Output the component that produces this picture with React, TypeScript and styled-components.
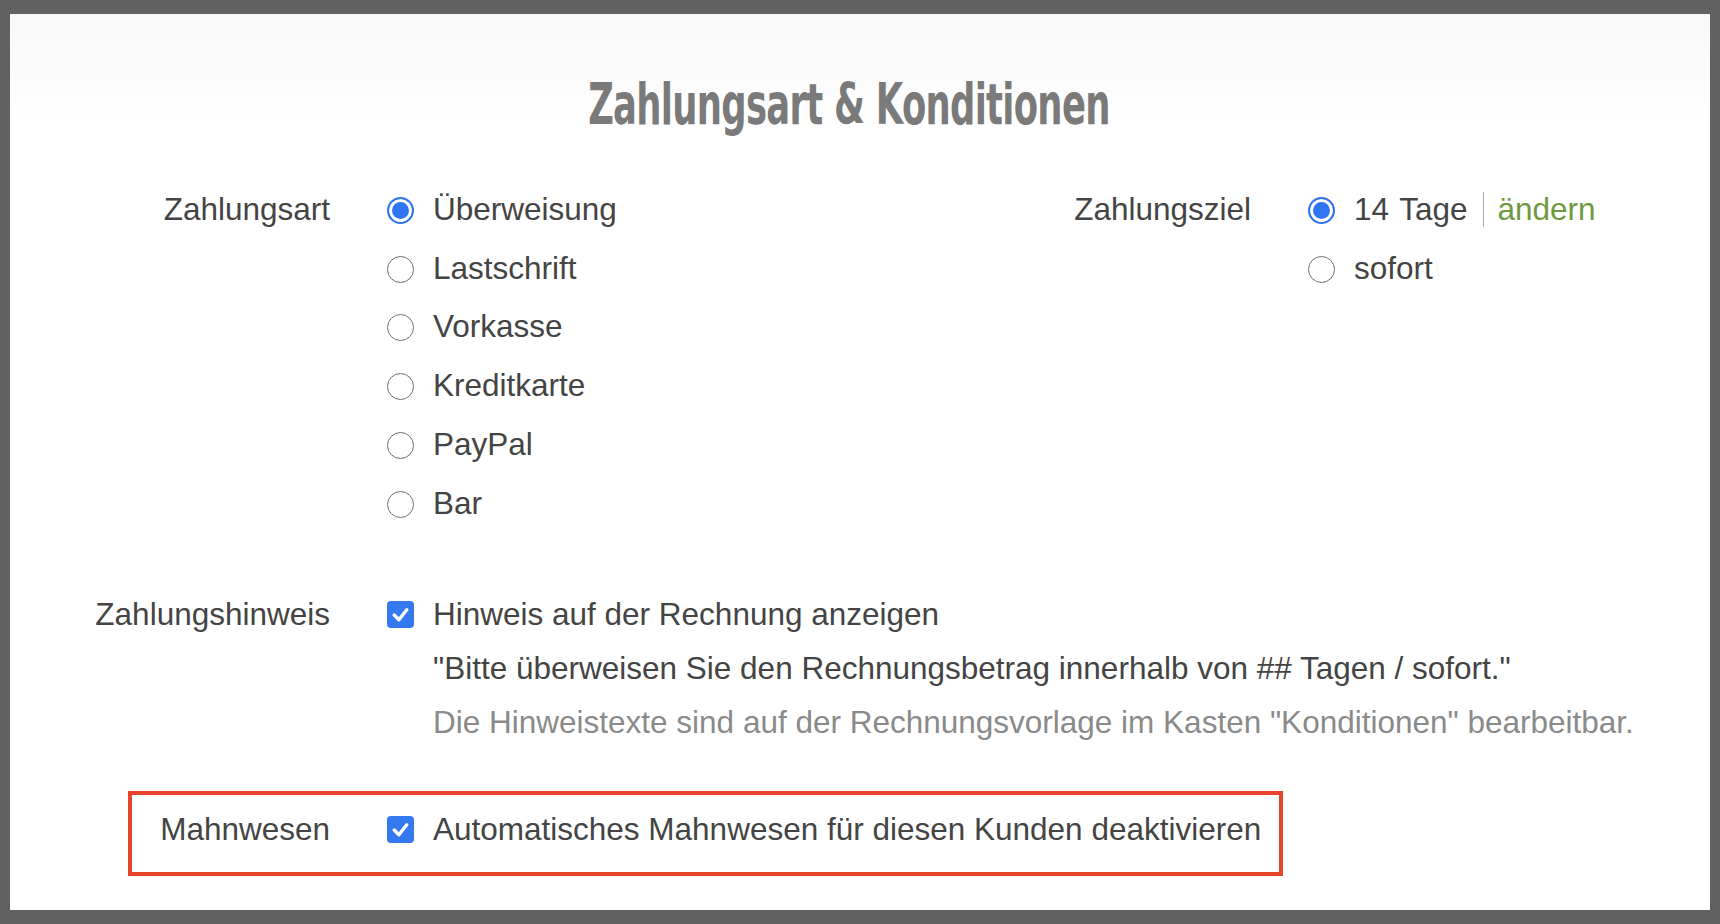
import React, { useState } from "react";
import styled, { createGlobalStyle } from "styled-components";

const GlobalStyle = createGlobalStyle`
  html, body {
    margin: 0;
    padding: 0;
    background: #616161;
  }
  body {
    font-family: "Liberation Sans", Arial, sans-serif;
  }
`;

const Frame = styled.div`
  box-sizing: border-box;
  height: 924px;
  padding: 14px 10px;
`;

const Panel = styled.div`
  height: 896px;
  background: linear-gradient(#f8f8f8 0, #fbfbfb 60px, #fff 110px);
  color: #444;
  font-size: 31.5px;
`;

const TitleBar = styled.div`
  display: flex;
  justify-content: center;
  padding: 62px 22px 0 0;
  height: 57px;
`;

const Title = styled.h1`
  margin: 0;
  font-family: "DejaVu Sans Condensed", "DejaVu Sans", sans-serif;
  font-stretch: condensed;
  font-weight: bold;
  font-size: 57px;
  line-height: 57px;
  letter-spacing: -1px;
  color: #7a7a7a;
  transform: scaleX(0.69);
  white-space: nowrap;
`;

const TopSection = styled.div`
  display: grid;
  grid-template-columns: 1064px 1fr;
  margin-top: 47px;
`;

interface FieldProps {
  labelWidth: number;
}

const Field = styled.div<FieldProps>`
  display: grid;
  grid-template-columns: ${(p) => p.labelWidth}px 1fr;
  column-gap: 57px;
  align-items: start;
`;

interface LabelProps {
  rowHeight: number;
}

const Label = styled.div<LabelProps>`
  text-align: right;
  line-height: ${(p) => p.rowHeight}px;
  white-space: nowrap;
  color: #444;
`;

const OptionList = styled.div`
  display: flex;
  flex-direction: column;
`;

interface OptionRowProps {
  rowHeight: number;
}

const OptionRow = styled.label<OptionRowProps>`
  display: flex;
  align-items: center;
  height: ${(p) => p.rowHeight}px;
  gap: 19px;
  white-space: nowrap;
  cursor: pointer;
`;

interface RadioProps {
  checked: boolean;
}

const Radio = styled.span<RadioProps>`
  box-sizing: border-box;
  flex: 0 0 auto;
  width: 27px;
  height: 27px;
  margin-top: 2px;
  border-radius: 50%;
  border: ${(p) => (p.checked ? "2.5px solid #2f74f0" : "1.5px solid #6e6e6e")};
  background: ${(p) => (p.checked ? "#2f74f0" : "#fff")};
  box-shadow: ${(p) => (p.checked ? "inset 0 0 0 3px #fff" : "none")};
`;

const CheckBox = styled.span`
  display: flex;
  align-items: center;
  justify-content: center;
  flex: 0 0 auto;
  width: 27px;
  height: 27px;
  border-radius: 4px;
  background: #3479f0;
`;

const Days = styled.span`
  margin-right: 2px;
`;

const Separator = styled.span`
  width: 1px;
  height: 35px;
  background: #aaa;
  margin: 0 -5px 0 -4px;
`;

const ChangeLink = styled.a`
  color: #70983f;
  text-decoration: none;
  cursor: pointer;
`;

const HintSection = styled.div`
  margin-top: 54.6px;
`;

const TextLine = styled.div<{ muted?: boolean }>`
  height: 54px;
  line-height: 54px;
  padding-left: 46px;
  white-space: nowrap;
  color: ${(p) => (p.muted ? "#8a8a8a" : "#444")};
`;

const Highlight = styled.div`
  margin: 42px 0 0 118px;
  width: 1155px;
  box-sizing: border-box;
  border: 4px solid #e8432b;
  padding: 7px 0 16px;
`;

const Check = () => (
  <CheckBox>
    <svg width="21" height="21" viewBox="0 0 20 20">
      <polyline
        points="4,10.5 8.5,15 16,5.5"
        fill="none"
        stroke="#fff"
        strokeWidth="3.2"
        strokeLinecap="round"
        strokeLinejoin="round"
      />
    </svg>
  </CheckBox>
);

const paymentTypes = ["Überweisung", "Lastschrift", "Vorkasse", "Kreditkarte", "PayPal", "Bar"];

function App() {
  const [paymentType, setPaymentType] = useState<string>(paymentTypes[0]);
  const [dueDate, setDueDate] = useState<string>("14");

  return (
    <>
      <GlobalStyle />
      <Frame>
        <Panel>
          <TitleBar>
            <Title>Zahlungsart &amp; Konditionen</Title>
          </TitleBar>

          <TopSection>
            <Field labelWidth={320}>
              <Label rowHeight={58.8}>Zahlungsart</Label>
              <OptionList>
                {paymentTypes.map((type) => (
                  <OptionRow rowHeight={58.8} key={type} onClick={() => setPaymentType(type)}>
                    <Radio checked={paymentType === type} />
                    {type}
                  </OptionRow>
                ))}
              </OptionList>
            </Field>
            <Field labelWidth={177}>
              <Label rowHeight={58.8}>Zahlungsziel</Label>
              <OptionList>
                <OptionRow rowHeight={58.8} onClick={() => setDueDate("14")}>
                  <Radio checked={dueDate === "14"} />
                  <span>
                    <Days>14</Days> Tage
                  </span>
                  <Separator />
                  <ChangeLink>ändern</ChangeLink>
                </OptionRow>
                <OptionRow rowHeight={58.8} onClick={() => setDueDate("sofort")}>
                  <Radio checked={dueDate === "sofort"} />
                  sofort
                </OptionRow>
              </OptionList>
            </Field>
          </TopSection>

          <HintSection>
            <Field labelWidth={320}>
              <Label rowHeight={54}>Zahlungshinweis</Label>
              <OptionList>
                <OptionRow rowHeight={54}>
                  <Check />
                  Hinweis auf der Rechnung anzeigen
                </OptionRow>
                <TextLine>
                  "Bitte überweisen Sie den Rechnungsbetrag innerhalb von ## Tagen / sofort."
                </TextLine>
                <TextLine muted>
                  Die Hinweistexte sind auf der Rechnungsvorlage im Kasten "Konditionen" bearbeitbar.
                </TextLine>
              </OptionList>
            </Field>
          </HintSection>

          <Highlight>
            <Field labelWidth={198}>
              <Label rowHeight={54}>Mahnwesen</Label>
              <OptionRow rowHeight={54}>
                <Check />
                Automatisches Mahnwesen für diesen Kunden deaktivieren
              </OptionRow>
            </Field>
          </Highlight>
        </Panel>
      </Frame>
    </>
  );
}

export default App;
